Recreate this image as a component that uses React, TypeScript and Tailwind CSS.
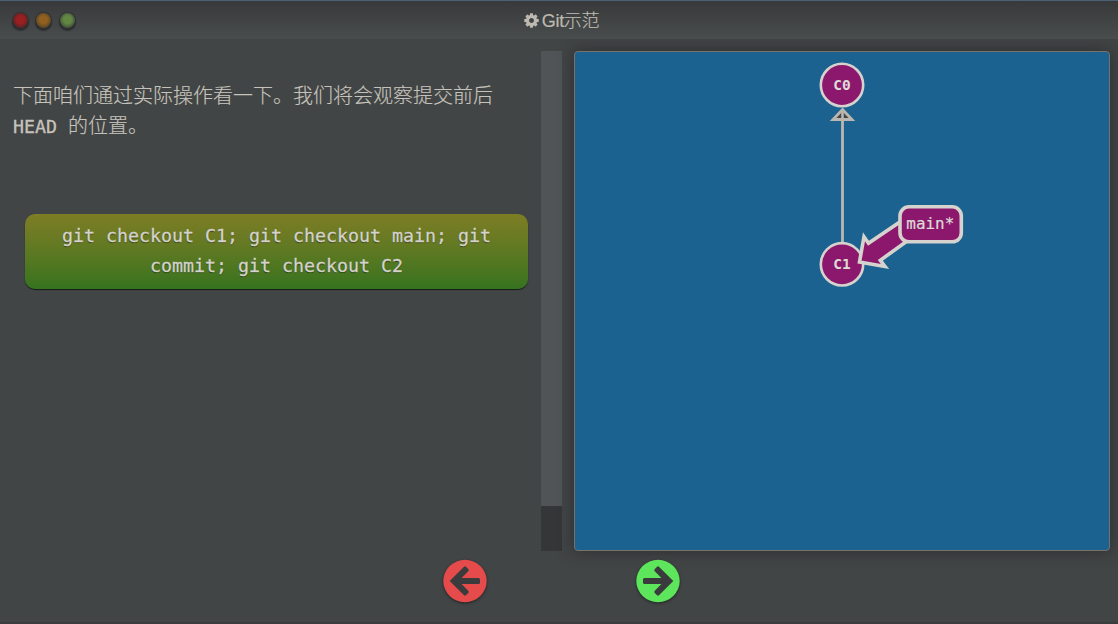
import type { ReactNode } from "react";

const COG =
  "M1024 896q0-106-75-181t-181-75-181 75-75 181 75 181 181 75 181-75 75-181zm512-109v222q0 12-8 23t-20 13l-185 28q-19 54-39 91 35 50 107 138 10 12 10 25t-9 23q-27 37-99 108t-94 71q-12 0-26-9l-138-108q-44 23-91 38-16 136-29 186-7 28-36 28h-222q-14 0-24.500-8.500t-11.500-21.500l-28-184q-49-16-90-37l-141 107q-10 9-25 9-14 0-25-11-126-114-165-168-7-10-7-23 0-12 8-23 15-21 51-66.500t54-70.500q-27-50-41-99l-183-27q-13-2-21-12.500t-8-23.500v-222q0-12 8-23t19-13l186-28q14-46 39-92-40-57-107-138-10-12-10-24 0-10 9-23 26-36 98.500-107.500t94.500-71.500q13 0 26 10l138 107q44-23 91-38 16-136 29-186 7-28 36-28h222q14 0 24.500 8.500t11.500 21.500l28 184q49 16 90 37l142-107q9-9 24-9 13 0 25 10 129 119 165 170 7 8 7 22 0 12-8 23-15 21-51 66.500t-54 70.500q26 50 41 98l183 28q13 2 21 12.500t8 23.500z";

function Light({ color }: { color: string }) {
  return (
    <span
      className={`h-[15px] w-[15px] rounded-full shadow-[0_2px_1px_1px_rgba(40,41,43,0.8),0_0_1px_1px_rgba(45,46,48,0.7)] ${color}`}
    />
  );
}

function TitleBar() {
  return (
    <header className="relative flex h-[39px] shrink-0 items-center border-t border-[#4b6175] bg-linear-to-b from-[#38393b] to-[#494d4e]">
      <div className="flex gap-[8.5px] pt-px pl-[12.5px]">
        <Light color="bg-[radial-gradient(circle_at_50%_45%,#9a1f20_35%,#4a2426_78%)]" />
        <Light color="bg-[radial-gradient(circle_at_50%_45%,#90601f_35%,#4e3f2b_78%)]" />
        <Light color="bg-[radial-gradient(circle_at_50%_45%,#628743_35%,#3d4a36_78%)]" />
      </div>
      <div className="absolute inset-x-0 flex items-center justify-center gap-[3px] pt-px pl-[5px] text-[#bdb9b0]">
        <svg className="mb-px h-[17px] w-[15px]" viewBox="0 0 1536 1792" fill="currentColor">
          <path d={COG} />
        </svg>
        <h1 className="font-['Liberation_Sans','Noto_Sans_CJK_SC',sans-serif] text-[18px] leading-[26px] font-light tracking-[-0.3px] [-webkit-text-stroke:0.2px]">
          Git示范
        </h1>
      </div>
    </header>
  );
}

function Lesson() {
  return (
    <section className="flex w-[541px] shrink-0 flex-col pr-[13px]">
      <p className="mt-[30px] pl-[13px] font-['DejaVu_Sans_Mono','Noto_Sans_CJK_SC',monospace] text-[20px] leading-[30px] font-light text-[#c6c3bc] [-webkit-text-stroke:0.15px]">
        下面咱们通过实际操作看一下。我们将会观察提交前后
        <br />
        <span className="text-[18.27px] font-normal [-webkit-text-stroke:0.3px]">HEAD </span>
        的位置。
      </p>
      <button className="mt-[72px] ml-[25px] h-[75px] rounded-[10px] bg-linear-to-b from-[#7e7d25] to-[#35731f] pb-px text-center font-['DejaVu_Sans_Mono',monospace] text-[18.27px] leading-[30px] text-[#d5d2cc] shadow-[0_1px_1px_#151a16] [-webkit-text-stroke:0.3px] [text-shadow:0_1px_1px_rgba(0,0,0,0.5)]">
        git checkout C1; git checkout main; git
        <br />
        commit; git checkout C2
      </button>
    </section>
  );
}

function CommitTree() {
  return (
    <section className="h-[500px] w-[536px] shrink-0 rounded-[4px] border border-[#77736b] bg-[#1c6291] shadow-[0_0_15px_rgba(40,40,44,0.9)]">
      <svg
        className="block h-[498px] w-[534px] font-['DejaVu_Sans_Mono',monospace]"
        viewBox="575 52 534 498"
      >
        <path d="M842.5 243V110" stroke="#b9b7af" strokeWidth="2.8" />
        <path d="M842.5 109.500L852 119.500H833Z" fill="#434548" stroke="#b9b7af" strokeWidth="2.8" />
        <path d="M842.5 122V110" stroke="#b9b7af" strokeWidth="2.6" />
        <g fill="#8c186d" stroke="#d6d3ce" strokeWidth="2.6">
          <circle cx="842" cy="85" r="21.200" />
          <circle cx="842" cy="264.300" r="21.200" />
        </g>
        <g fill="#8c186d" stroke="#d6d3ce" strokeWidth="3.6">
          <path d="M859.5 262L864 236.800L868.500 243.200L908 216.500L917 234L880.300 260.300L885 266.500Z" />
          <rect x="900" y="206.800" width="61.300" height="35" rx="9" />
        </g>
        <g fill="#dedad6" textAnchor="middle">
          <text x="842" y="90.300" fontSize="14" fontWeight="700" textLength="17.500" lengthAdjust="spacingAndGlyphs">C0</text>
          <text x="842" y="269.300" fontSize="14" fontWeight="700" textLength="17.500" lengthAdjust="spacingAndGlyphs">C1</text>
          <text x="930.300" y="229" fontSize="15.500" textLength="48" lengthAdjust="spacingAndGlyphs" stroke="#dedad6" strokeWidth="0.2">main*</text>
        </g>
      </svg>
    </section>
  );
}

function RoundButton({ label, children }: { label: string; children: ReactNode }) {
  return (
    <button aria-label={label} className="h-11 w-11">
      <svg className="h-11 w-11 overflow-visible drop-shadow-[0_1px_1.5px_rgba(0,0,0,0.5)]" viewBox="0 0 44 44">
        {children}
      </svg>
    </button>
  );
}

const ARROW =
  "M6.700 22L20.800 7.900Q22 6.700 23.200 7.900L25.200 9.900Q26.400 11.100 25.200 12.300L18.600 18.900H35.500Q37 18.900 37 20.400V23.600Q37 25.100 35.500 25.100H18.600L25.200 31.700Q26.400 32.900 25.200 34.100L23.200 36.100Q22 37.300 20.800 36.100Z";

function Controls() {
  return (
    <nav className="flex gap-[149px] pt-2 pl-[443px]">
      <RoundButton label="上一步">
        <ellipse cx="22" cy="22" rx="21.700" ry="21.200" fill="#e64b4b" />
        <path d={ARROW} fill="#393b3c" />
      </RoundButton>
      <RoundButton label="下一步">
        <ellipse cx="22" cy="22" rx="21.700" ry="21.200" fill="#5de65b" />
        <path d={ARROW} fill="#393b3c" transform="matrix(-1 0 0 1 44 0)" />
      </RoundButton>
    </nav>
  );
}

export default function App() {
  return (
    <main className="flex h-[624px] w-[1118px] flex-col overflow-hidden border-b-2 border-[#3b3c3e] bg-[#424545]">
      <TitleBar />
      <div className="flex h-[512px] shrink-0 pt-3">
        <Lesson />
        <div className="mr-3 h-[500px] w-[21px] shrink-0 bg-[#353638]">
          <div className="h-[455px] bg-[#505456]" />
        </div>
        <CommitTree />
      </div>
      <Controls />
    </main>
  );
}
